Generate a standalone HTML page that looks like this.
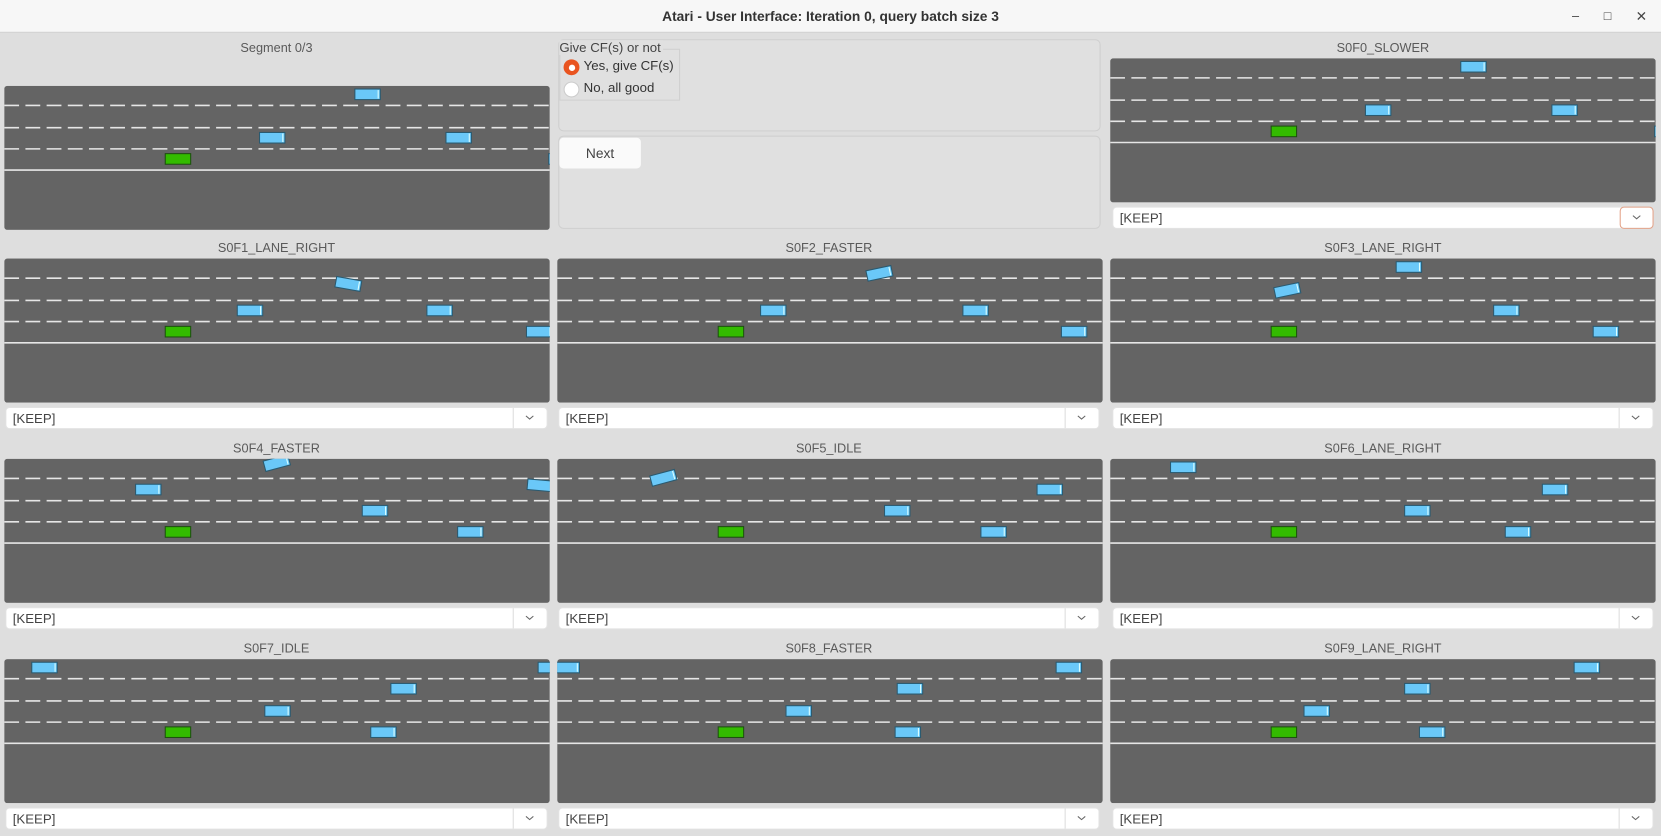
<!DOCTYPE html>
<html><head><meta charset="utf-8"><style>
*{box-sizing:border-box;margin:0;padding:0}
body{width:1661px;height:835px;overflow:hidden;background:#dedede;font-family:"Liberation Sans","DejaVu Sans",sans-serif}
#w{position:absolute;left:0;top:0;width:1568px;height:789px;transform:scale(1.05931,1.0596);transform-origin:0 0}
.tb{position:absolute;left:0;top:0;width:1568px;height:31px;background:#f7f7f7;border-bottom:1px solid #d0d0d0;text-align:center;font-weight:bold;font-size:13px;line-height:31px;color:#333}
.wc{position:absolute;top:0;font-size:12px;color:#444;line-height:31px}
.lbl{position:absolute;font-size:12px;color:#5a5a5a;text-align:center}
svg.road{position:absolute;border-radius:3px}
.combo{position:absolute;height:21px;background:#fff;border-radius:4px;border:1px solid #e2e2e2;font-size:12.5px;color:#444;line-height:20px;padding-left:6px}
.combo .b{position:absolute;right:0;top:0;width:32px;height:19px;border-left:1px solid #ddd}
.combo .b.o{border:1px solid #e4a48a;border-radius:4px;top:-1px;height:21px;right:-1px}
.combo .b svg{position:absolute;left:11px;top:7px}
.gb{position:absolute;border:1px solid #cfcfcf;border-radius:5px;background:#e0e0e0}
</style></head><body><div id="w">
<div class="tb">Atari - User Interface: Iteration 0, query batch size 3</div>
<div class="wc" style="left:1484px">&#8211;</div>
<div class="wc" style="left:1514px">&#9633;</div>
<div class="wc" style="left:1544px;font-size:13px">&#10005;</div>

<svg width="0" height="0" style="position:absolute"><defs>
<g id="rd"><rect width="515" height="136" fill="#646464"/>
<g stroke="#e6e6e6" stroke-width="1.5" stroke-dasharray="14,6"><line x1="0" y1="18.5" x2="515" y2="18.5"/><line x1="0" y1="39.5" x2="515" y2="39.5"/><line x1="0" y1="59.5" x2="515" y2="59.5"/></g>
<line x1="0" y1="79.5" x2="515" y2="79.5" stroke="#e6e6e6" stroke-width="1.5"/>
<rect x="152" y="64" width="24" height="10" fill="#33bb00" stroke="#1e5010"/></g>
<g id="c"><rect x="-12" y="-4" width="24" height="10" fill="#6ac8f8" stroke="#2a5a70"/><line x1="10" y1="-3" x2="10" y2="5" stroke="#dff" /></g>
<g id="ch"><path d="M0.5 0.5 L4 3.5 L7.5 0.5" fill="none" stroke="#666" stroke-width="1"/></g>
</defs></svg>

<div class="lbl" style="left:4px;top:38px;width:514px">Segment 0/3</div>
<svg class="road" style="left:4px;top:81px" width="515" height="136"><use href="#rd"/><use href="#c" x="343" y="7"/><use href="#c" x="253" y="48"/><use href="#c" x="429" y="48"/><use href="#c" x="526" y="68"/></svg>

<div class="gb" style="left:527px;top:37px;width:512px;height:87px"></div>
<div style="position:absolute;left:528px;top:46px;width:114px;height:49px;border:1px solid #d0d0d0"></div>
<div style="position:absolute;left:528px;top:38px;font-size:12.5px;color:#444;background:#e0e0e0;padding-right:2px">Give CF(s) or not</div>
<div style="position:absolute;left:532px;top:56px;width:15px;height:15px;border-radius:50%;background:#e95420"><div style="position:absolute;left:4.5px;top:4.5px;width:6px;height:6px;border-radius:50%;background:#fff"></div></div>
<div style="position:absolute;left:551px;top:55px;font-size:12.5px;color:#333">Yes, give CF(s)</div>
<div style="position:absolute;left:532px;top:77px;width:15px;height:15px;border-radius:50%;background:#fff;border:1px solid #ccc"></div>
<div style="position:absolute;left:551px;top:76px;font-size:12.5px;color:#333">No, all good</div>
<div class="gb" style="left:527px;top:128px;width:512px;height:88px"></div>
<div style="position:absolute;left:528px;top:130px;width:77px;height:29px;background:#fafafa;border-radius:4px;font-size:13px;color:#444;text-align:center;line-height:29px">Next</div>

<div class="lbl" style="left:1048px;top:38px;width:515px">S0F0_SLOWER</div>
<svg class="road" style="left:1048px;top:55px" width="515" height="136"><use href="#rd"/><use href="#c" x="343" y="7"/><use href="#c" x="253" y="48"/><use href="#c" x="429" y="48"/><use href="#c" x="526" y="68"/></svg>
<div class="combo" style="left:1050px;top:195px;width:511px">[KEEP]<div class="b o"><svg width="8" height="5"><use href="#ch"/></svg></div></div>

<div class="lbl" style="left:4px;top:227px;width:514px">S0F1_LANE_RIGHT</div>
<svg class="road" style="left:4px;top:244px" width="515" height="136"><use href="#rd"/><use href="#c" transform="translate(325,23) rotate(10)"/><use href="#c" x="232" y="48"/><use href="#c" x="411" y="48"/><use href="#c" x="505" y="68"/></svg>
<div class="combo" style="left:5px;top:384px;width:512px">[KEEP]<div class="b"><svg width="8" height="5"><use href="#ch"/></svg></div></div>

<div class="lbl" style="left:526px;top:227px;width:513px">S0F2_FASTER</div>
<svg class="road" style="left:526px;top:244px" width="515" height="136"><use href="#rd"/><use href="#c" transform="translate(304,13) rotate(-12)"/><use href="#c" x="204" y="48"/><use href="#c" x="395" y="48"/><use href="#c" x="488" y="68"/></svg>
<div class="combo" style="left:527px;top:384px;width:511px">[KEEP]<div class="b"><svg width="8" height="5"><use href="#ch"/></svg></div></div>

<div class="lbl" style="left:1048px;top:227px;width:515px">S0F3_LANE_RIGHT</div>
<svg class="road" style="left:1048px;top:244px" width="515" height="136"><use href="#rd"/><use href="#c" x="282" y="7"/><use href="#c" transform="translate(167,29) rotate(-12)"/><use href="#c" x="374" y="48"/><use href="#c" x="468" y="68"/></svg>
<div class="combo" style="left:1050px;top:384px;width:511px">[KEEP]<div class="b"><svg width="8" height="5"><use href="#ch"/></svg></div></div>

<div class="lbl" style="left:4px;top:416px;width:514px">S0F4_FASTER</div>
<svg class="road" style="left:4px;top:433px" width="515" height="136"><use href="#rd"/><use href="#c" transform="translate(257,3) rotate(-15)"/><use href="#c" x="136" y="28"/><use href="#c" transform="translate(506,24) rotate(5)"/><use href="#c" x="350" y="48"/><use href="#c" x="440" y="68"/></svg>
<div class="combo" style="left:5px;top:573px;width:512px">[KEEP]<div class="b"><svg width="8" height="5"><use href="#ch"/></svg></div></div>

<div class="lbl" style="left:526px;top:416px;width:513px">S0F5_IDLE</div>
<svg class="road" style="left:526px;top:433px" width="515" height="136"><use href="#rd"/><use href="#c" transform="translate(100,17) rotate(-15)"/><use href="#c" x="465" y="28"/><use href="#c" x="321" y="48"/><use href="#c" x="412" y="68"/></svg>
<div class="combo" style="left:527px;top:573px;width:511px">[KEEP]<div class="b"><svg width="8" height="5"><use href="#ch"/></svg></div></div>

<div class="lbl" style="left:1048px;top:416px;width:515px">S0F6_LANE_RIGHT</div>
<svg class="road" style="left:1048px;top:433px" width="515" height="136"><use href="#rd"/><use href="#c" x="69" y="7"/><use href="#c" x="420" y="28"/><use href="#c" x="290" y="48"/><use href="#c" x="385" y="68"/></svg>
<div class="combo" style="left:1050px;top:573px;width:511px">[KEEP]<div class="b"><svg width="8" height="5"><use href="#ch"/></svg></div></div>

<div class="lbl" style="left:4px;top:605px;width:514px">S0F7_IDLE</div>
<svg class="road" style="left:4px;top:622px" width="515" height="136"><use href="#rd"/><use href="#c" x="38" y="7"/><use href="#c" x="516" y="7"/><use href="#c" x="377" y="27"/><use href="#c" x="258" y="48"/><use href="#c" x="358" y="68"/></svg>
<div class="combo" style="left:5px;top:762px;width:512px">[KEEP]<div class="b"><svg width="8" height="5"><use href="#ch"/></svg></div></div>

<div class="lbl" style="left:526px;top:605px;width:513px">S0F8_FASTER</div>
<svg class="road" style="left:526px;top:622px" width="515" height="136"><use href="#rd"/><use href="#c" x="9" y="7"/><use href="#c" x="483" y="7"/><use href="#c" x="333" y="27"/><use href="#c" x="228" y="48"/><use href="#c" x="331" y="68"/></svg>
<div class="combo" style="left:527px;top:762px;width:511px">[KEEP]<div class="b"><svg width="8" height="5"><use href="#ch"/></svg></div></div>

<div class="lbl" style="left:1048px;top:605px;width:515px">S0F9_LANE_RIGHT</div>
<svg class="road" style="left:1048px;top:622px" width="515" height="136"><use href="#rd"/><use href="#c" x="450" y="7"/><use href="#c" x="290" y="27"/><use href="#c" x="195" y="48"/><use href="#c" x="304" y="68"/></svg>
<div class="combo" style="left:1050px;top:762px;width:511px">[KEEP]<div class="b"><svg width="8" height="5"><use href="#ch"/></svg></div></div>
</div></body></html>
